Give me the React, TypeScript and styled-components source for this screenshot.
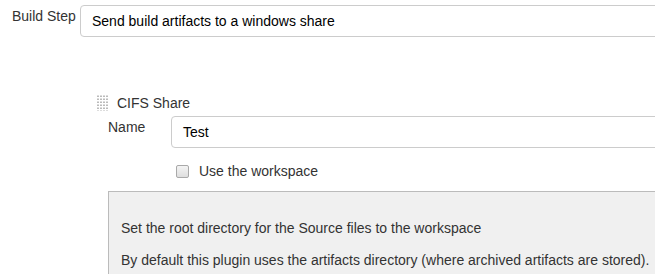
import styled, { createGlobalStyle } from "styled-components";

const GlobalStyle = createGlobalStyle`
  html, body {
    margin: 0;
    padding: 0;
    background: #ffffff;
    overflow: hidden;
  }
  body {
    font-family: "Liberation Sans", Arial, sans-serif;
    font-size: 14px;
    color: #333333;
  }
`;

const Page = styled.div`
  width: 655px;
  height: 274px;
  overflow: hidden;
  position: relative;
`;

const StepRow = styled.div`
  display: flex;
  align-items: flex-start;
  padding-top: 5px;
`;

const Label = styled.div<{ $width: number; $indent?: number }>`
  width: ${(p) => p.$width}px;
  padding-left: ${(p) => p.$indent ?? 0}px;
  flex-shrink: 0;
  box-sizing: border-box;
  padding-top: 3px;
  font-size: 14px;
  color: #333;
  line-height: 16px;
`;

const TextBox = styled.div`
  flex-shrink: 0;
  width: 640px;
  height: 32px;
  box-sizing: border-box;
  border: 1px solid #cccccc;
  border-radius: 4px;
  padding: 0 11px;
  display: flex;
  align-items: center;
  font-size: 14px;
  color: #000;
  background: #fff;
`;

const Section = styled.div`
  margin-top: 58px;
  padding-left: 97px;
`;

const SectionHeader = styled.div`
  display: flex;
  align-items: center;
  gap: 9px;
  height: 16px;
  font-size: 14px;
  color: #333;
`;

const Grip = () => (
  <svg width="11" height="16" viewBox="0 0 11 16">
    {Array.from({ length: 6 }).map((_, r) =>
      Array.from({ length: 4 }).map((_, c) => (
        <rect
          key={`${r}-${c}`}
          x={c * 3}
          y={r * 3 + 0.5}
          width="2"
          height="1.5"
          fill="#bbbbbb"
        />
      ))
    )}
  </svg>
);

const FieldRow = styled.div`
  display: flex;
  align-items: flex-start;
  margin-top: 5px;
  padding-left: 11px;
`;

const CheckRow = styled.div`
  display: flex;
  align-items: center;
  gap: 10px;
  margin-top: 16px;
  padding-left: 79px;
  height: 14px;
  font-size: 14px;
  color: #333;
`;

const CheckBox = styled.span`
  width: 11px;
  height: 11px;
  border: 1px solid #a9a9a9;
  border-radius: 2px;
  background: linear-gradient(#f4f4f4, #dedede);
  flex-shrink: 0;
`;

const HelpBox = styled.div`
  margin-top: 13px;
  margin-left: 11px;
  width: 600px;
  box-sizing: border-box;
  border-top: 1px solid #bbbbbb;
  border-left: 1px solid #bbbbbb;
  background: #f0f0f0;
  padding: 14px 12px 20px 12px;
  font-size: 14px;
  color: #333;
  line-height: 19px;

  p {
    margin: 13px 0 0 0;
    white-space: nowrap;
  }
`;

export default function App() {
  return (
    <Page>
      <GlobalStyle />
      <StepRow>
        <Label $width={80} $indent={12}>
          Build Step
        </Label>
        <TextBox>Send build artifacts to a windows share</TextBox>
      </StepRow>
      <Section>
        <SectionHeader>
          <Grip />
          CIFS Share
        </SectionHeader>
        <FieldRow>
          <Label $width={63}>Name</Label>
          <TextBox>Test</TextBox>
        </FieldRow>
        <CheckRow>
          <CheckBox />
          Use the workspace
        </CheckRow>
        <HelpBox>
          <p>Set the root directory for the Source files to the workspace</p>
          <p>
            By default this plugin uses the artifacts directory (where archived
            artifacts are stored).
          </p>
        </HelpBox>
      </Section>
    </Page>
  );
}
